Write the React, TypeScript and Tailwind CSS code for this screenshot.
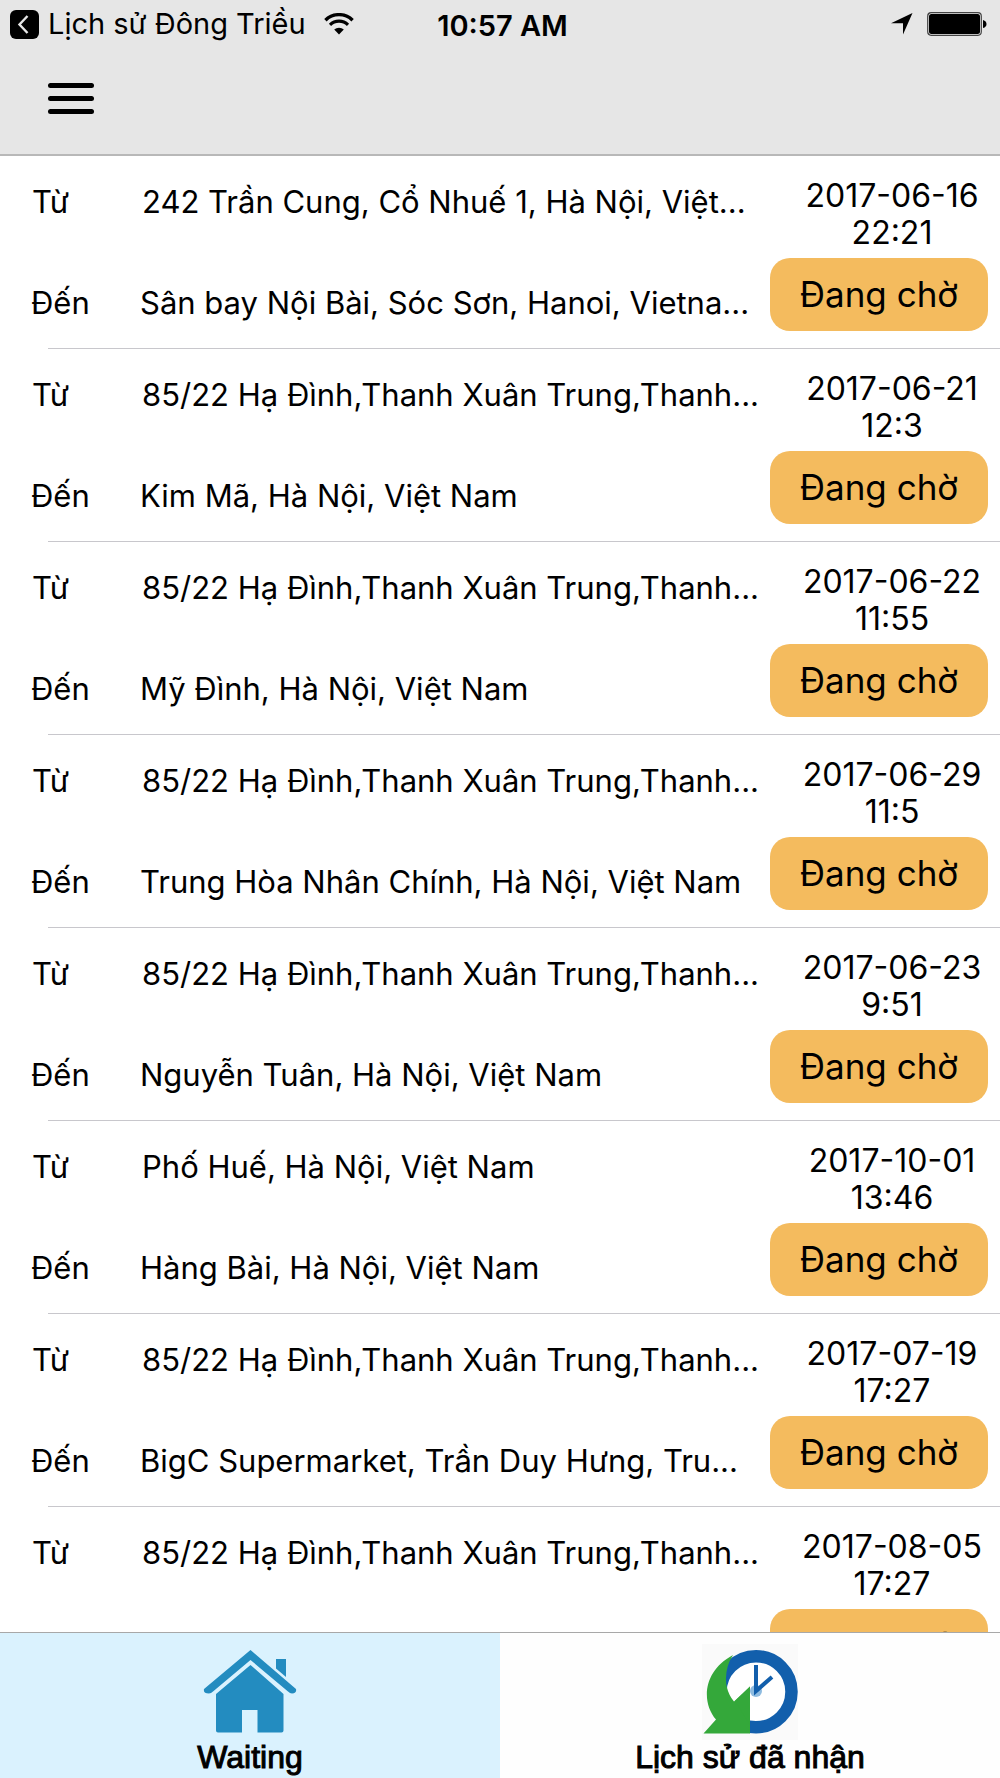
import React from 'react';

interface Trip {
  id: number;
  from: string;
  to?: string;
  date: string;
  time: string;
}

const HOME_ADDRESS = '85/22 Hạ Đình,Thanh Xuân Trung,Thanh...';

const trips: Trip[] = [
  {
    id: 1,
    from: '242 Trần Cung, Cổ Nhuế 1, Hà Nội, Việt...',
    to: 'Sân bay Nội Bài, Sóc Sơn, Hanoi, Vietna...',
    date: '2017-06-16',
    time: '22:21',
  },
  { id: 2, from: HOME_ADDRESS, to: 'Kim Mã, Hà Nội, Việt Nam', date: '2017-06-21', time: '12:3' },
  { id: 3, from: HOME_ADDRESS, to: 'Mỹ Đình, Hà Nội, Việt Nam', date: '2017-06-22', time: '11:55' },
  { id: 4, from: HOME_ADDRESS, to: 'Trung Hòa Nhân Chính, Hà Nội, Việt Nam', date: '2017-06-29', time: '11:5' },
  { id: 5, from: HOME_ADDRESS, to: 'Nguyễn Tuân, Hà Nội, Việt Nam', date: '2017-06-23', time: '9:51' },
  { id: 6, from: 'Phố Huế, Hà Nội, Việt Nam', to: 'Hàng Bài, Hà Nội, Việt Nam', date: '2017-10-01', time: '13:46' },
  { id: 7, from: HOME_ADDRESS, to: 'BigC Supermarket, Trần Duy Hưng, Tru...', date: '2017-07-19', time: '17:27' },
  { id: 8, from: HOME_ADDRESS, date: '2017-08-05', time: '17:27' },
];

const StatusBar = () => {
  return (
    <div className="grid grid-cols-[1fr_auto_1fr] items-center h-12 pl-[10px] pr-[13px] text-[29px] leading-[34px]">
      <div className="flex items-center whitespace-nowrap">
        <button className="flex items-center gap-[9px]">
          <svg width="29" height="29" viewBox="0 0 29 29" aria-hidden="true">
            <rect width="29" height="29" rx="6" fill="#000" />
            <path d="M17.5 6 9.5 14.5 17.5 23" fill="none" stroke="#e6e6e6" strokeWidth="2.4" />
          </svg>
          Lịch sử Đông Triều
        </button>
        <svg className="ml-[18px]" width="30" height="22" viewBox="0 0 30 22" aria-hidden="true">
          <path d="M1.4 7.2a19.4 19.4 0 0 1 27.2 0" fill="none" stroke="#000" strokeWidth="3.4" />
          <path d="M6 11.8a13 13 0 0 1 18 0" fill="none" stroke="#000" strokeWidth="3.2" />
          <path d="M15 21.5 10.2 16.6a7 7 0 0 1 9.6 0z" fill="#000" />
        </svg>
      </div>
      <div className="font-semibold pt-1 pl-2">10:57 AM</div>
      <div className="flex items-center justify-end gap-[14px]">
        <svg width="22" height="22" viewBox="0 0 22 22" aria-hidden="true">
          <path d="M21.5 0 12 21.5V10.2H0z" fill="#000" />
        </svg>
        <svg width="60" height="24" viewBox="0 0 60 24" aria-hidden="true">
          <rect x="0.7" y="0.7" width="53.6" height="22.6" rx="3.5" fill="none" stroke="#444" strokeWidth="1.2" />
          <rect x="2" y="2" width="51" height="20" rx="2.5" fill="#000" />
          <path d="M56 8q3.5 1 3.5 4t-3.5 4z" fill="#000" />
        </svg>
      </div>
    </div>
  );
};

const TripRow = ({ trip }: { trip: Trip }) => {
  return (
    <li className="h-[193px] flex flex-col">
      <div className="grow flex text-[31px] leading-[37px]">
        <div className="grow min-w-0 flex flex-col gap-16 pt-[27px]">
          <div className="flex pl-8">
            <span className="w-[110px] shrink-0">Từ</span>
            <span className="whitespace-nowrap">{trip.from}</span>
          </div>
          {trip.to ? (
            <div className="flex pl-[31px]">
              <span className="w-[109px] shrink-0">Đến</span>
              <span className="whitespace-nowrap">{trip.to}</span>
            </div>
          ) : (
            <></>
          )}
        </div>
        <div className="w-[230px] shrink-0 pt-[21px]">
          <div className="pl-[14px] text-center text-[32px] leading-[37px]">
            <div>{trip.date}</div>
            <div>{trip.time}</div>
          </div>
          <button className="block w-[218px] h-[73px] mt-[7px] rounded-[20px] bg-[#f4bb5e] text-[35px]">Đang chờ</button>
        </div>
      </div>
      <div className="ml-12 border-b border-[#c8c7cc]" />
    </li>
  );
};

const HouseIcon = () => {
  return (
    <svg width="96" height="96" viewBox="0 0 96 96" fill="#238cc0" aria-hidden="true">
      <path d="M48.5 6 94 45q1 4-4 4.500-2 0-4-2L48.500 16 11 47.500q-2 2-4 2-6 0-5-4.500z" />
      <path d="M48.500 21 81.500 50v36.500q0 2-2 2H55.500V66H40v22.500H16q-2 0-2-2V50z" />
      <path d="M74 15h10v18l-10-8.500z" />
    </svg>
  );
};

const HistoryIcon = () => {
  return (
    <svg width="96" height="96" viewBox="0 0 96 96" aria-hidden="true">
      <rect width="96" height="96" fill="#fafafa" />
      <circle cx="54" cy="47.700" r="35.500" fill="#fff" stroke="#125fac" strokeWidth="12.500" />
      <path d="M31 11Q22 25 24.500 42 27 52 32 57.500L48 42.500V89.500H1.500L14 75.500C-1 58 1 27 31 11z" fill="#34a83a" />
      <path d="M48 42.500 33 57V57L48 81z" fill="#34a83a" />
      <circle cx="54" cy="47" r="6" fill="#8ebbe0" />
      <path d="M54 21v26l16-14" fill="none" stroke="#125fac" strokeWidth="4" />
    </svg>
  );
};

const TabBar = () => {
  return (
    <nav className="flex shrink-0 h-[146px] border-t border-[#a8a8a8] bg-[#fefefe] font-['Liberation_Sans',sans-serif] text-[32px] leading-[34px]">
      <button className="flex-1 flex flex-col items-center pt-[11px] bg-[#daf2fe]" aria-current="page">
        <HouseIcon />
        <span className="[-webkit-text-stroke:1px]">Waiting</span>
      </button>
      <button className="flex-1 flex flex-col items-center pt-[11px]">
        <HistoryIcon />
        <span className="[-webkit-text-stroke:1px]">Lịch sử đã nhận</span>
      </button>
    </nav>
  );
};

const App = () => {
  return (
    <div className="h-screen flex flex-col overflow-hidden bg-white text-black font-[Inter,'Noto_Sans',sans-serif]">
      <header className="shrink-0 h-[156px] bg-[#e6e6e6] border-b-2 border-[#b8b8b8]">
        <StatusBar />
        <button className="flex flex-col gap-2 ml-12 mt-[35px] w-[46px]" aria-label="Menu">
          <span className="w-full h-[5px] rounded-full bg-black" />
          <span className="w-full h-[5px] rounded-full bg-black" />
          <span className="w-full h-[5px] rounded-full bg-black" />
        </button>
      </header>
      <main className="flex-1 min-h-0 overflow-hidden">
        <ul>
          {trips.map(trip => {
            return <TripRow key={trip.id} trip={trip} />;
          })}
        </ul>
      </main>
      <TabBar />
    </div>
  );
};

export default App;
